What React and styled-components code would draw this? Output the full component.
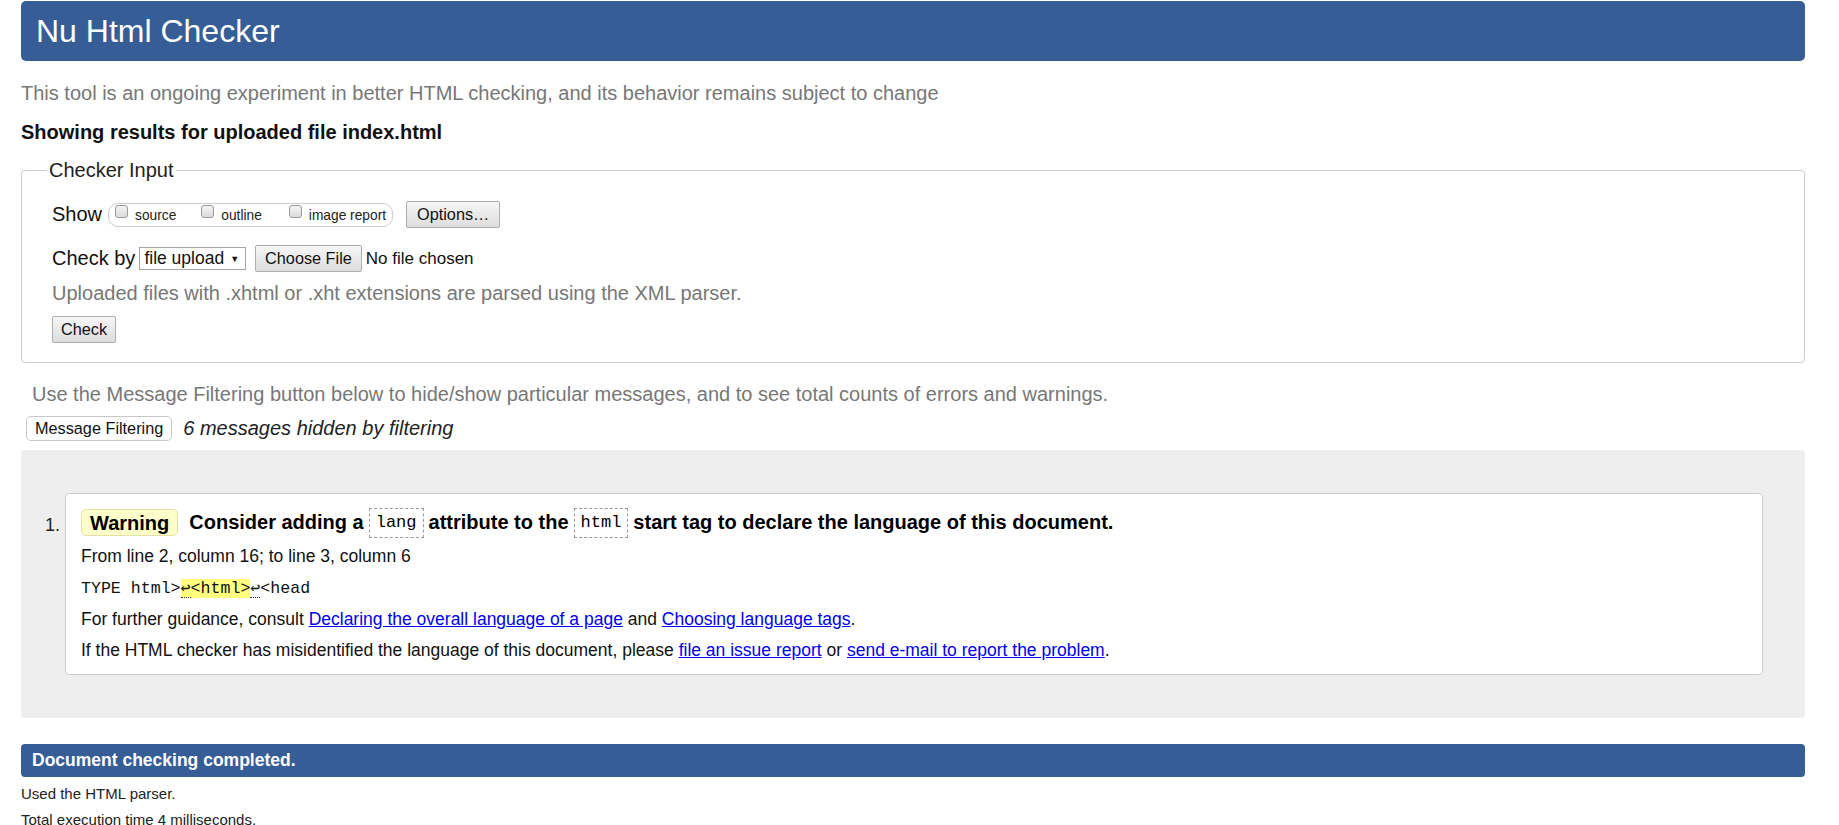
import React from "react";
import styled, { createGlobalStyle } from "styled-components";

const Global = createGlobalStyle`
  html, body { margin: 0; padding: 0; background: #fff; }
  body { font-family: "Liberation Sans", Arial, sans-serif; color: #000; }
`;

const Page = styled.div`
  padding: 1px 34px 0 21px;
`;

const Header = styled.header`
  height: 60px;
  background: #365d95;
  border-radius: 5px;
  padding-left: 15px;
  color: #fff;
  font-size: 32px;
  line-height: 60px;
`;

const Note = styled.p`
  margin: ${(p) => p.$mt || 0}px 0 0 ${(p) => p.$ml || 0}px;
  font-size: ${(p) => p.$size || 20}px;
  line-height: ${(p) => p.$lh || 24}px;
  color: ${(p) => p.$color || "#777"};
  font-weight: ${(p) => (p.$bold ? 700 : 400)};
`;

const Fieldset = styled.fieldset`
  margin: 15px 0 0 0;
  padding: 20px 30px 19px 30px;
  border: 1px solid #ccc;
  border-radius: 4px;
  min-width: 0;
`;

const Legend = styled.legend`
  margin-left: -5px;
  padding: 0 2px;
  font-size: 20px;
  line-height: 22px;
  color: #222;
`;

const Row = styled.div`
  display: flex;
  align-items: center;
  height: 27px;
  margin-top: ${(p) => p.$mt || 0}px;
  font-size: 20px;
  color: #111;
`;

const Label = styled.span`
  margin-right: ${(p) => p.$mr || 4}px;
`;

const Pill = styled.span`
  display: inline-flex;
  align-items: flex-start;
  height: 22px;
  border: 1px solid #ccc;
  border-radius: 10px;
  padding: 0 6px 0 6px;
  margin-right: 13px;
`;

const CheckItem = styled.label`
  display: inline-flex;
  align-items: flex-start;
  margin-right: ${(p) => p.$mr || 0}px;
  font-size: 13.75px;
  color: #222;
`;

const Box = styled.span`
  width: 13px;
  height: 13px;
  margin-top: 1px;
  box-sizing: border-box;
  border: 1px solid #9a9a9a;
  border-radius: 3px;
  background: linear-gradient(#f3f3f3, #dcdcdc);
  margin-right: 7px;
`;

const CheckText = styled.span`
  line-height: 22px;
  padding-top: 1px;
`;

const Button = styled.button`
  font-family: inherit;
  font-size: 16.25px;
  color: #111;
  height: ${(p) => p.$h || 27}px;
  padding: 0 ${(p) => p.$px || 10}px;
  margin: ${(p) => p.$mt || 0}px ${(p) => p.$mr || 0}px 0 0;
  border: 1px solid #adadad;
  border-radius: 2px;
  background: linear-gradient(#f6f6f6, #dddddd);
  cursor: default;
`;

const Select = styled.span`
  display: inline-flex;
  align-items: center;
  height: 23px;
  box-sizing: border-box;
  border: 1px solid #a6a6a6;
  background: #fff;
  padding: 0 6px 0 4px;
  font-size: 17.5px;
  margin-right: 9px;
  gap: 6px;
`;

const Caret = styled.span`
  font-size: 9px;
`;

const Plain = styled.span`
  font-size: 17px;
`;

const FilterRow = styled.div`
  display: flex;
  align-items: center;
  margin-top: 10px;
  padding-left: 5px;
  gap: 11px;
`;

const FilterButton = styled.button`
  font-family: inherit;
  font-size: 16.25px;
  color: #111;
  height: 25px;
  padding: 0 8px;
  background: #fff;
  border: 1px solid #c8c8c8;
  border-radius: 5px;
`;

const Hidden = styled.em`
  font-size: 20px;
  color: #222;
`;

const Results = styled.section`
  margin-top: 9px;
  background: #eee;
  border-radius: 4px;
  padding: 43px 42px 43px 44px;
`;

const List = styled.ol`
  margin: 0;
  padding: 0;
  list-style: none;
`;

const Item = styled.li`
  position: relative;
  background: #fff;
  border: 1px solid #ccc;
  border-radius: 4px;
  padding: 13px 14px 8px 15px;
`;

const Num = styled.span`
  position: absolute;
  left: -21px;
  top: 16px;
  font-size: 18px;
  line-height: 31px;
  color: #222;
`;

const Title = styled.p`
  margin: 0 0 3px;
  font-size: 20px;
  font-weight: 700;
  line-height: 31px;
  height: 31px;
  display: flex;
  align-items: center;
  white-space: pre;
`;

const Badge = styled.strong`
  display: inline-block;
  height: 27px;
  line-height: 26px;
  box-sizing: border-box;
  padding: 0 8px;
  background: #ffffcc;
  border: 1px solid #e6e0a4;
  border-radius: 5px;
  margin-right: 11px;
`;

const Code = styled.code`
  display: inline-block;
  height: 30px;
  line-height: 28px;
  box-sizing: border-box;
  padding: 0 6px;
  border: 1px dashed #999;
  font-family: "Liberation Mono", "DejaVu Sans Mono", monospace;
  font-size: 17px;
  font-weight: 400;
  margin: 0 5px;
`;

const Line = styled.p`
  margin: 0;
  font-size: 17.5px;
  line-height: 31px;
  color: #111;
`;

const Extract = styled.p`
  margin: 0;
  font-family: "Liberation Mono", "DejaVu Sans Mono", monospace;
  font-size: 16.6px;
  line-height: 31px;
  color: #111;
`;

const Mark = styled.mark`
  background: #ffff80;
  color: inherit;
`;

const Lf = styled.span`
  font-family: "DejaVu Sans Mono", monospace;
  border-bottom: 1px dotted #333;
`;

const Link = styled.a`
  color: #0000ee;
  text-decoration: underline;
`;

const Done = styled.div`
  margin-top: 26px;
  height: 33px;
  line-height: 33px;
  background: #365d95;
  border-radius: 4px;
  color: #fff;
  font-weight: 700;
  font-size: 17.5px;
  padding-left: 11px;
`;

const Small = styled.p`
  margin: ${(p) => p.$mt || 0}px 0 0;
  font-size: 15px;
  line-height: 26px;
  color: #222;
`;

export default function App() {
  return (
    <Page>
      <Global />
      <Header>Nu Html Checker</Header>
      <Note $mt={20}>
        This tool is an ongoing experiment in better HTML checking, and its behavior remains subject to change
      </Note>
      <Note $mt={15} $size={20} $bold $color="#111">
        Showing results for uploaded file index.html
      </Note>
      <Fieldset>
        <Legend>Checker Input</Legend>
        <Row>
          <Label $mr={6}>Show</Label>
          <Pill>
            <CheckItem $mr={25}>
              <Box />
              <CheckText>source</CheckText>
            </CheckItem>
            <CheckItem $mr={27}>
              <Box />
              <CheckText>outline</CheckText>
            </CheckItem>
            <CheckItem>
              <Box />
              <CheckText>image report</CheckText>
            </CheckItem>
          </Pill>
          <Button>Options…</Button>
        </Row>
        <Row $mt={17}>
          <Label>Check by</Label>
          <Select>
            file upload <Caret>▼</Caret>
          </Select>
          <Button $px={9} $mr={4}>Choose File</Button>
          <Plain>No file chosen</Plain>
        </Row>
        <Note $mt={9}>
          Uploaded files with .xhtml or .xht extensions are parsed using the XML parser.
        </Note>
        <Button $px={8} $mt={11}>Check</Button>
      </Fieldset>
      <Note $mt={19} $ml={11}>
        Use the Message Filtering button below to hide/show particular messages, and to see total counts of errors and warnings.
      </Note>
      <FilterRow>
        <FilterButton>Message Filtering</FilterButton>
        <Hidden>6 messages hidden by filtering</Hidden>
      </FilterRow>
      <Results>
        <List>
          <Item>
            <Num>1.</Num>
            <Title>
              <Badge>Warning</Badge>
              {"Consider adding a"}
              <Code>lang</Code>
              {"attribute to the"}
              <Code>html</Code>
              {"start tag to declare the language of this document."}
            </Title>
            <Line>From line 2, column 16; to line 3, column 6</Line>
            <Extract>
              TYPE html&gt;
              <Mark>
                <Lf>↩</Lf>&lt;html&gt;
              </Mark>
              <Lf>↩</Lf>&lt;head
            </Extract>
            <Line>
              For further guidance, consult <Link href="#">Declaring the overall language of a page</Link> and{" "}
              <Link href="#">Choosing language tags</Link>.
            </Line>
            <Line>
              If the HTML checker has misidentified the language of this document, please{" "}
              <Link href="#">file an issue report</Link> or <Link href="#">send e-mail to report the problem</Link>.
            </Line>
          </Item>
        </List>
      </Results>
      <Done>Document checking completed.</Done>
      <Small $mt={4}>Used the HTML parser.</Small>
      <Small>Total execution time 4 milliseconds.</Small>
    </Page>
  );
}
